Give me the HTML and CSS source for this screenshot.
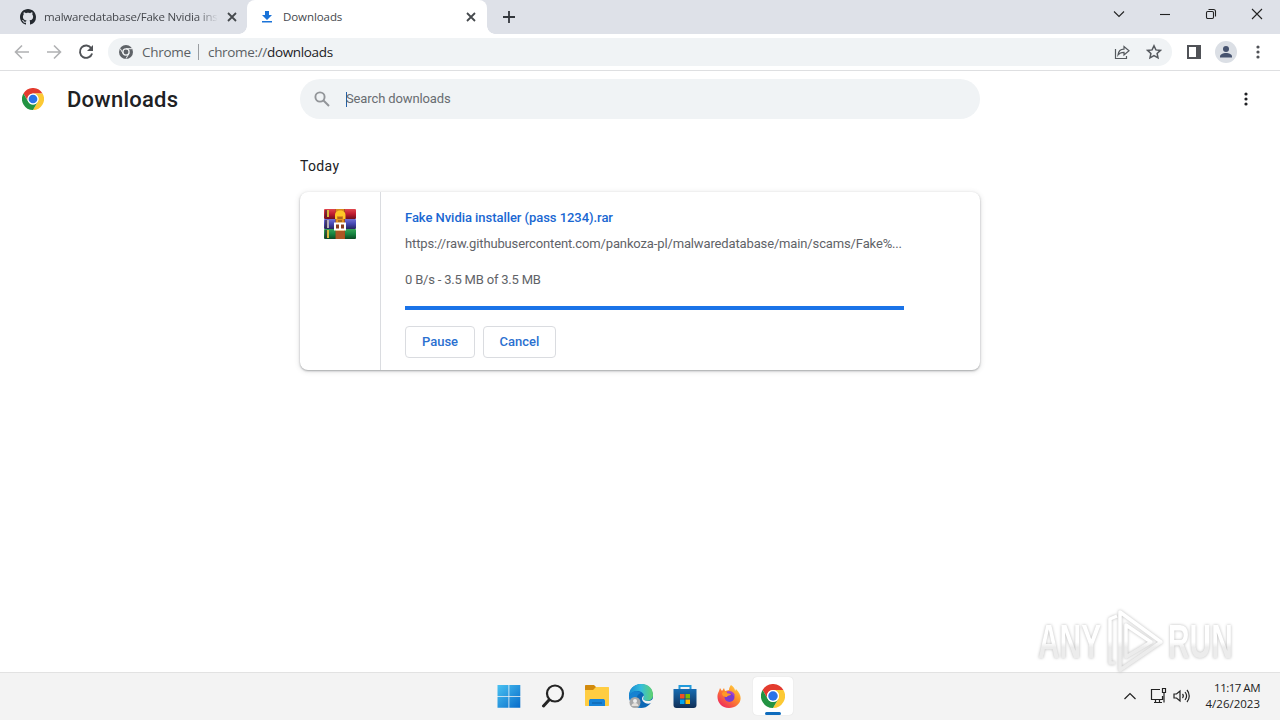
FILE: index.html
```html
<!doctype html>
<html lang="en">
<head>
<meta charset="UTF-8">
<title>Downloads</title>
<link rel="stylesheet" href="styles.css">
</head>
<body>
	<svg class="defs" width="0" height="0">
		<symbol id="chrome" viewBox="0 0 48 48">
			<path fill="#e33b2e" d="M24 12H44.8A24 24 0 0 0 3.2 12L13.6 30A12 12 0 0 1 24 12Z"/>
			<path fill="#fcc934" d="M34.4 30L24 48A24 24 0 0 0 44.8 12H24A12 12 0 0 1 34.4 30Z"/>
			<path fill="#229342" d="M13.6 30L3.2 12A24 24 0 0 0 24 48L34.4 30A12 12 0 0 1 13.6 30Z"/>
			<circle cx="24" cy="24" r="12" fill="#fff"/>
			<circle cx="24" cy="24" r="9.5" fill="#2a73e8"/>
		</symbol>
		<symbol id="close" viewBox="0 0 10 10">
			<path d="M1 1l8 8M9 1l-8 8" fill="none" stroke="#45494d" stroke-width="1.8"/>
		</symbol>
		<symbol id="dots" viewBox="0 0 4 16">
			<circle cx="2" cy="3" r="1.6"/><circle cx="2" cy="8" r="1.6"/><circle cx="2" cy="13" r="1.6"/>
		</symbol>
	</svg>

	<div class="tabs">
		<div class="tab">
			<svg class="favicon" viewBox="0 0 16 16"><path fill="#24292f" d="M8 0C3.58 0 0 3.58 0 8c0 3.54 2.29 6.53 5.47 7.59.4.07.55-.17.55-.38 0-.19-.01-.82-.01-1.49-2.01.37-2.53-.49-2.69-.94-.09-.23-.48-.94-.82-1.13-.28-.15-.68-.52-.01-.53.63-.01 1.08.58 1.23.82.72 1.21 1.87.87 2.33.66.07-.52.28-.87.51-1.07-1.78-.2-3.64-.89-3.64-3.95 0-.87.31-1.59.82-2.15-.08-.2-.36-1.02.08-2.12 0 0 .67-.21 2.2.82.64-.18 1.32-.27 2-.27s1.36.09 2 .27c1.53-1.04 2.2-.82 2.2-.82.44 1.1.16 1.92.08 2.12.51.56.82 1.27.82 2.15 0 3.07-1.87 3.75-3.65 3.95.29.25.54.73.54 1.48 0 1.07-.01 1.93-.01 2.2 0 .21.15.46.55.38A8.01 8.01 0 0 0 16 8c0-4.42-3.58-8-8-8z"/></svg>
			<span class="tab-title long">malwaredatabase/Fake Nvidia ins</span>
			<svg class="tab-close"><use href="#close"/></svg>
		</div>
		<div class="tab active">
			<svg class="favicon" viewBox="0 0 16 16"><path fill="#1a73d8" d="M6 2h4v4h3L8 11 3 6h3zM3 12h10v1.500H3z"/></svg>
			<span class="tab-title">Downloads</span>
			<svg class="tab-close"><use href="#close"/></svg>
		</div>
		<svg class="new-tab" viewBox="0 0 12 12"><path d="M6 0v12M0 6h12" stroke="#33373c" stroke-width="1.800"/></svg>
		<div class="window-buttons">
			<svg viewBox="0 0 12 12"><path d="M1 3.500l5 5 5-5"/></svg>
			<svg viewBox="0 0 12 12"><path d="M1 6.500h10"/></svg>
			<svg viewBox="0 0 12 12"><rect x="1.500" y="3.500" width="7" height="7" rx="1.200"/><path d="M3.500 1.500h5a2 2 0 0 1 2 2v5"/></svg>
			<svg viewBox="0 0 12 12"><path d="M1 1l10 10M11 1L1 11"/></svg>
		</div>
	</div>

	<div class="toolbar">
		<svg class="nav faded" viewBox="0 0 16 16"><path d="M15 8H2M8 1.500L1.500 8 8 14.500"/></svg>
		<svg class="nav faded" viewBox="0 0 16 16"><path d="M1 8h13M8 1.500L14.500 8 8 14.500"/></svg>
		<svg class="nav" viewBox="0 0 16 16"><path d="M13.300 4.200A6.200 6.200 0 1 0 14.100 9.500"/><path class="solid" d="M15 1v6H9z"/></svg>
		<div class="omnibox">
			<svg class="site" viewBox="0 0 14 14">
				<circle cx="7" cy="7" r="7" fill="#5f6368"/>
				<circle cx="7" cy="7" r="3.100" fill="#5f6368" stroke="#f1f3f4" stroke-width="1.300"/>
				<path d="M7 3.700h6M4.100 8.600L1.200 3.600M9.900 8.600L7 13.700" stroke="#f1f3f4" stroke-width="1"/>
			</svg>
			<span class="origin">Chrome</span>
			<span class="url">chrome://<b>downloads</b></span>
			<svg class="share" viewBox="0 0 16 16"><path d="M1.500 5v9.500h11V12"/><path d="M4 11c.5-4 3-5.800 6-5.800V2.500L15 6.800l-5 4.100V8.400C7.500 8.400 5.500 9 4 11z"/></svg>
			<svg class="star" viewBox="0 0 16 16"><path d="M8 1.800l1.900 4.100 4.500.5-3.300 3 .9 4.500L8 11.600l-4 2.300.9-4.500-3.300-3 4.500-.5z"/></svg>
		</div>
		<svg class="panel" viewBox="0 0 14 14"><path fill="#505257" fill-rule="evenodd" d="M0 0h14v14H0zM2 2v10h7V2z"/></svg>
		<svg class="avatar" viewBox="0 0 22 22"><circle cx="11" cy="11" r="11" fill="#dbdfe5"/><circle cx="11" cy="8" r="3" fill="#46536f"/><path fill="#46536f" d="M5 16.500v-1c0-2 3-3.500 6-3.500s6 1.500 6 3.500v1z"/></svg>
		<svg class="menu"><use href="#dots"/></svg>
	</div>

	<div class="page">
		<div class="header">
			<svg class="logo"><use href="#chrome"/></svg>
			<h1>Downloads</h1>
			<div class="search">
				<svg viewBox="0 0 16 16"><circle cx="6" cy="6" r="4.600"/><path d="M9.500 9.500L15 15"/></svg>
				<span class="caret"></span>
				<span class="hint">Search downloads</span>
			</div>
			<svg class="more"><use href="#dots"/></svg>
		</div>

		<div class="list">
			<h2>Today</h2>
			<div class="card">
				<div class="file-icon">
					<svg viewBox="0 0 32 30">
						<defs>
							<linearGradient id="r" x2="0" y2="1"><stop stop-color="#e0474d"/><stop offset=".5" stop-color="#c01b30"/><stop offset="1" stop-color="#6d101c"/></linearGradient>
							<linearGradient id="b" x2="0" y2="1"><stop stop-color="#7070d8"/><stop offset=".5" stop-color="#4346b0"/><stop offset="1" stop-color="#252460"/></linearGradient>
							<linearGradient id="g" x2="0" y2="1"><stop stop-color="#37a558"/><stop offset=".5" stop-color="#168440"/><stop offset="1" stop-color="#0b4822"/></linearGradient>
						</defs>
						<rect width="32" height="10" rx="1" fill="url(#r)"/>
						<rect y="10" width="32" height="10" rx="1" fill="url(#b)"/>
						<rect y="20" width="32" height="10" rx="1" fill="url(#g)"/>
						<path d="M1 1h4v7H1zM1 11h4v8H1zM1 21h4v8H1z" fill="#3b2730" opacity=".55"/>
						<path d="M3 1h2v7H3zM3 21h2v8H3z" fill="#d8b83c"/><path d="M3 11h2v8H3z" fill="#b5afb9"/>
						<rect x="11.500" width="9.500" height="30" fill="#a8501d"/>
						<path d="M12 0h8v22h-8z" fill="#d98b1d"/>
						<path d="M11 6c0-6 10.500-6 10.500 0v4H11z" fill="#ffc727"/>
						<path d="M13 7h6v6l-3 2-3-2z" fill="#e69120"/><path d="M13.500 9h5M14 12h4" stroke="#71401a"/>
						<rect x="11" y="14.500" width="10" height="6" fill="#8a3d1d" stroke="#fff" stroke-width="2"/>
						<path d="M16 15v5" stroke="#fff" stroke-width="2"/>
						<path d="M12 22h8v8h-8z" fill="#ad5724"/>
					</svg>
				</div>
				<div class="content">
					<a class="name">Fake Nvidia installer (pass 1234).rar</a>
					<div class="source">https://raw.githubusercontent.com/pankoza-pl/malwaredatabase/main/scams/Fake%...</div>
					<div class="status">0 B/s - 3.5 MB of 3.5 MB</div>
					<div class="progress"></div>
					<div class="actions">
						<button class="pause">Pause</button>
						<button class="cancel">Cancel</button>
					</div>
				</div>
			</div>
		</div>
	</div>

	<div class="watermark">
		<div class="word"><span>ANY</span></div>
		<svg viewBox="0 0 58 64">
			<defs><linearGradient id="fade" gradientUnits="userSpaceOnUse" x1="0" y1="0" x2="0" y2="64"><stop offset=".5" stop-color="#fff"/><stop offset=".6" stop-color="#ececec"/></linearGradient></defs>
			<path d="M9 54H4V10l7-3M14 3v58l41-28zM20 16v32l25-15z"/>
		</svg>
		<div class="word"><span>RUN</span></div>
	</div>

	<div class="taskbar">
		<div class="apps">
			<div class="app"><svg viewBox="0 0 24 24">
				<defs><linearGradient id="win" gradientUnits="userSpaceOnUse" x2="24" y2="24"><stop stop-color="#4cc5f3"/><stop offset="1" stop-color="#0669c9"/></linearGradient></defs>
				<path fill="url(#win)" d="M.5 1h11v11H.500zM12.300 1h11v11h-11zM.5 12.800h11v11H.500zM12.300 12.800h11v11h-11z"/>
			</svg></div>
			<div class="app"><svg viewBox="0 0 24 24"><circle cx="14" cy="9.500" r="8" fill="#f5f5f5" stroke="#242424" stroke-width="2.200"/><path d="M8 16l-5.500 6" stroke="#242424" stroke-width="3" stroke-linecap="round"/></svg></div>
			<div class="app"><svg viewBox="0 0 24 24">
				<path fill="#d28a0c" d="M0 2c0-1 .5-1 1-1h8l2 2v5H0z"/>
				<path fill="#ffcd42" d="M0 6h8l3-3h12c1 0 1 .5 1 1v17c0 1-.5 1-1 1H1c-1 0-1-.5-1-1z"/>
				<path fill="#1683d8" d="M4 22v-5c0-1.500 1-2 2-2h12c1 0 2 .5 2 2v5z"/><path d="M7 19h10" stroke="#0f68b4" stroke-width="1.500"/>
			</svg></div>
			<div class="app"><svg viewBox="0 0 24 24">
				<defs>
					<linearGradient id="edge" x2="1"><stop stop-color="#168bd3"/><stop offset=".5" stop-color="#35bddc"/><stop offset="1" stop-color="#61d36b"/></linearGradient>
				</defs>
				<circle cx="12" cy="12" r="12" fill="#0b67b5"/>
				<path fill="url(#edge)" d="M0 12C0-4 24-4 24 11c0 5-5 7-9 5-2-1 0-2 0-4 0-5-10-8-15 0z"/>
				<path fill="#1682d1" d="M0 12c3-6 9-6 12-3-5 1-7 9 0 14C5 24 0 18 0 12z"/>
				<path fill="#f2f2f2" d="M14.500 11.500c1 2-1.500 3 .5 4.500 3 2 7 1 9-1v3.500l-2 .5c-5 2.500-12-3-7.500-7.500z"/>
				<circle cx="6" cy="18.500" r="5.500" fill="#a7a8a9"/><circle cx="6" cy="17" r="2" fill="#eee"/><path fill="#e5e1dc" d="M2.500 22c0-4 7-4 7 0z"/>
			</svg></div>
			<div class="app"><svg viewBox="0 0 24 24">
				<defs><linearGradient id="store" x2="0" y2="1"><stop stop-color="#176cb2"/><stop offset="1" stop-color="#102f57"/></linearGradient></defs>
				<path d="M6.500 6V2h11v4" fill="none" stroke="#229bdc" stroke-width="2"/>
				<path fill="url(#store)" d="M.5 5h23v16c0 2-1 3-3 3h-17c-2 0-3-1-3-3z"/>
				<path fill="#f25022" d="M7 10h4.500v4.500H7z"/><path fill="#7fba00" d="M12.500 10H17v4.500h-4.500z"/>
				<path fill="#00a4ef" d="M7 15.500h4.500V20H7z"/><path fill="#ffb900" d="M12.500 15.500H17V20h-4.500z"/>
			</svg></div>
			<div class="app"><svg viewBox="0 0 24 24">
				<defs><linearGradient id="fox" x1="1" x2=".2" y2="1"><stop stop-color="#ffe34b"/><stop offset=".45" stop-color="#ff9028"/><stop offset="1" stop-color="#ee245f"/></linearGradient></defs>
				<path fill="url(#fox)" d="M14 1c3 2 4 4 4 6l1-2c10 10 2 19-7 19C2 24-2 14 2 7l1-3 2 3 2-3 1 3 4-1c0-2 1-4 2-5z"/>
				<circle cx="12.500" cy="13" r="5" fill="#7b3bd0"/>
				<path fill="#ff9a25" d="M5 9c2-2 4-1 5.500 0l3.500 1c0 2-4 1-4 3-3 0-5-1-5-4z"/>
				<path d="M10 8.500c3-1.500 6 0 7 3" fill="none" stroke="#a544d0" stroke-width="2"/>
			</svg></div>
			<div class="app current"><svg><use href="#chrome"/></svg></div>
		</div>
		<div class="tray">
			<svg class="up" viewBox="0 0 12 8"><path d="M.5 7L6 1.500 11.500 7"/></svg>
			<svg class="net" viewBox="0 0 17 17"><path d="M10 2.500H1.500v10h11V9M4 15.500h8M5.500 12.500v3M9.500 12.500v3M12.500 1.500h3v4h-3zM14 5.500v10"/></svg>
			<svg class="sound" viewBox="0 0 17 16"><path d="M1 6v4h2.500L7 13V3L3.500 6zM9.500 6c1 1.200 1 2.800 0 4M12 4c2 2.500 2 5.500 0 8M14 2c3 3.500 3 8.500 0 12"/></svg>
			<div class="clock"><div class="time">11:17 AM</div><div>4/26/2023</div></div>
		</div>
	</div>
</body>
</html>
```

FILE: styles.css
```css
* { box-sizing: border-box }
body {
	display: flex;
	flex-direction: column;
	margin: 0;
	width: 1280px;
	height: 720px;
	overflow: hidden;
	background: #fff;
	font-family: Roboto, sans-serif;
	color: #202124;
}
svg { display: block; flex: none }
.defs { position: absolute }

/* tab strip */
.tabs {
	display: flex;
	align-items: center;
	height: 34px;
	background: #dee1e8;
	font: 12px "Open Sans", sans-serif;
}
.tab {
	display: flex;
	align-items: center;
	width: 247px;
	height: 34px;
	padding: 0 10px 0 20px;
	color: #45484d;
}
.tab.active {
	position: relative;
	width: 240px;
	padding: 0 11px 0 12px;
	border-radius: 8px 8px 0 0;
	background: #fff;
}
.tab.active::before, .tab.active::after {
	content: "";
	position: absolute;
	bottom: 0;
	left: -8px;
	width: 8px;
	height: 8px;
	background: radial-gradient(circle at 0 0, transparent 7.5px, #fff 8px);
}
.tab.active::after {
	left: auto;
	right: -8px;
	background: radial-gradient(circle at 100% 0, transparent 7.5px, #fff 8px);
}
.favicon { width: 16px; height: 16px; margin-right: 8px }
.tab-title {
	flex: 1;
	min-width: 0;
	white-space: nowrap;
	line-height: 20px;
	font-size: 11.5px;
	letter-spacing: -.08px;
}
.tab-title.long {
	letter-spacing: -.2px;
	-webkit-mask-image: linear-gradient(90deg, #000 88%, transparent);
	mask-image: linear-gradient(90deg, #000 88%, transparent);
}
.tab-close { width: 10px; height: 10px; margin-left: 9px }
.new-tab { width: 12px; height: 12px; margin-left: 16px }
.window-buttons {
	display: flex;
	gap: 34px;
	margin: -6px 17px 0 auto;
}
.window-buttons svg {
	width: 12px;
	height: 12px;
	fill: none;
	stroke: #222;
	stroke-width: 1.1;
}

/* toolbar */
.toolbar {
	display: flex;
	align-items: center;
	height: 37px;
	padding: 0 20px 0 14px;
	border-bottom: 1px solid #dedfe1;
	background: #fff;
}
.nav {
	width: 16px;
	height: 16px;
	margin-right: 16px;
	fill: none;
	stroke: #505357;
	stroke-width: 1.9;
}
.nav .solid { fill: #505357; stroke: none }
.nav.faded { stroke: #b0b1b3; stroke-width: 1.6 }
.omnibox {
	display: flex;
	align-items: center;
	width: 1064px;
	height: 28px;
	margin-left: -2px;
	padding: 0 10px 0 11px;
	border-radius: 14px;
	background: #f0f3f5;
	font: 14px "Open Sans", sans-serif;
	color: #5b5f64;
}
.site { width: 14px; height: 14px; margin-right: 9px }
.origin {
	width: 57px;
	height: 16px;
	line-height: 16px;
	border-right: 1px solid #9a9da1;
	font-size: 13.5px;
	letter-spacing: -.3px;
}
.url { margin-left: 9px; font-size: 13.5px; letter-spacing: -.33px }
.url b { font-weight: 400; color: #202124 }
.share, .star {
	width: 16px;
	height: 16px;
	fill: none;
	stroke: #55595e;
	stroke-width: 1.2;
}
.share { margin-left: auto; margin-right: 16px }
.star { stroke-width: 1.5 }
.panel { width: 14px; height: 14px; margin-left: 15px }
.avatar { width: 22px; height: 22px; margin-left: 14px }
.menu { width: 4px; height: 16px; margin-left: auto; fill: #505257 }

/* downloads page */
.page { flex: 1 }
.header {
	display: flex;
	align-items: center;
	height: 56px;
	padding-left: 22px;
}
.logo { width: 22px; height: 22px }
h1 {
	width: 233px;
	margin: 0 0 0 23px;
	font-size: 22px;
	font-weight: 500;
	letter-spacing: .25px;
}
.search {
	display: flex;
	align-items: center;
	width: 680px;
	height: 40px;
	padding-left: 14px;
	border-radius: 20px;
	background: #f0f3f5;
	font-size: 13px;
	color: #686c71;
}
.search svg {
	width: 16px;
	height: 16px;
	fill: none;
	stroke: #929599;
	stroke-width: 1.9;
}
.caret { width: 1px; height: 15px; margin-left: 16px; margin-right: -1px; background: #2460a8 }
.hint { padding-bottom: 2px; letter-spacing: -.12px }
.more { width: 4px; height: 16px; margin-left: 264px; fill: #202124 }
.list { width: 680px; margin: 0 auto }
h2 {
	margin: 0;
	padding-top: 29px;
	height: 65px;
	font-size: 14px;
	font-weight: 400;
	line-height: 20px;
	letter-spacing: .35px;
}
.card {
	display: flex;
	height: 178px;
	border-radius: 8px;
	background: #fff;
	box-shadow: 0 1px 2px rgba(60, 64, 67, .4), 0 1px 5px 1px rgba(60, 64, 67, .13);
}
.file-icon {
	width: 81px;
	padding: 17px 24px;
	border-right: 1px solid #dadce0;
}
.file-icon svg { width: 32px; height: 30px }
.content {
	width: 523px;
	padding: 16px 0 0 24px;
	font-size: 13px;
	line-height: 20px;
	color: #5f6368;
}
.name { display: block; font-weight: 500; letter-spacing: -.05px; color: #1967d2 }
.source { margin-top: 6px; white-space: nowrap; letter-spacing: -.14px }
.status { margin-top: 16px; letter-spacing: -.2px }
.progress { height: 4px; margin-top: 16px; background: #1a73e8 }
.actions { display: flex; gap: 8px; margin-top: 16px }
button {
	height: 32px;
	padding: 0 0 2px;
	border: 1px solid #dadce0;
	border-radius: 4px;
	background: #fff;
	font: 500 13px Roboto, sans-serif;
	color: #2b70d0;
}
.pause { width: 70px }
.cancel { width: 73px }

/* watermark over the desktop */
.watermark {
	position: absolute;
	left: 1038px;
	top: 609px;
	display: flex;
	align-items: center;
	font: 700 49px/64px "Liberation Sans", sans-serif;
	filter: drop-shadow(0 0 1.5px #bbb);
}
.word { width: 64px }
.word span {
	display: inline-block;
	transform: scaleX(.61);
	transform-origin: 0 50%;
	background: linear-gradient(#fff 52%, #ececec 60%);
	-webkit-background-clip: text;
	background-clip: text;
	color: transparent;
}
.watermark svg {
	width: 58px;
	height: 64px;
	margin: 0 4px;
	fill: none;
	stroke: url(#fade);
	stroke-width: 3.5;
	stroke-linejoin: round;
}

/* taskbar */
.taskbar {
	display: flex;
	align-items: center;
	height: 48px;
	padding: 0 0 2px 489px;
	border-top: 1px solid #e2e2e2;
	background: #f3f3f3;
}
.apps { display: flex; gap: 4px }
.app {
	position: relative;
	display: flex;
	align-items: center;
	justify-content: center;
	width: 40px;
	height: 38px;
}
.app svg { width: 24px; height: 24px }
.app.current { border-radius: 4px; background: #fff; box-shadow: 0 0 1px #ccc }
.app.current::after {
	content: "";
	position: absolute;
	bottom: 0;
	left: 12px;
	width: 16px;
	height: 3px;
	border-radius: 2px;
	background: #0f6cbd;
}
.tray {
	display: flex;
	align-items: center;
	margin-left: auto;
	padding-right: 20px;
}
.tray svg { fill: none; stroke: #222; stroke-width: 1.2 }
.up { width: 12px; height: 8px; margin-right: 14px }
.net { width: 17px; height: 17px; margin-right: 6px }
.sound { width: 17px; height: 16px; margin-right: 16px }
.clock {
	font: 11.5px/16px "Open Sans", sans-serif;
	text-align: right;
	color: #222;
}
.time { letter-spacing: -.5px }
```
